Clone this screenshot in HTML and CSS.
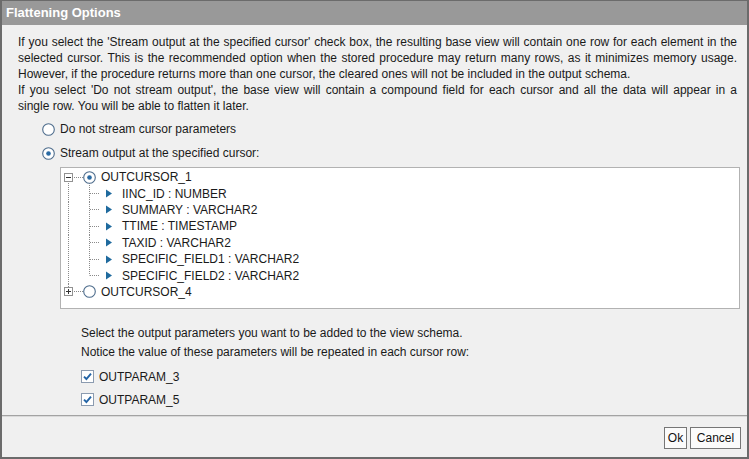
FILE: index.html
```html
<!DOCTYPE html>
<html>
<head>
<meta charset="utf-8">
<link rel="stylesheet" href="styles.css">
</head>
<body>
<div class="dialog">
  <div class="titlebar">Flattening Options</div>
  <div class="content">
    <div class="para">
      <span class="ln jl">If you select the 'Stream output at the specified cursor' check box, the resulting base view will contain one row for each element in the</span>
      <span class="ln jl">selected cursor. This is the recommended option when the stored procedure may return many rows, as it minimizes memory usage.</span>
      <span class="ln">However, if the procedure returns more than one cursor, the cleared ones will not be included in the output schema.</span>
    </div>
    <div class="para">
      <span class="ln jl">If you select 'Do not stream output', the base view will contain a compound field for each cursor and all the data will appear in a</span>
      <span class="ln">single row. You will be able to flatten it later.</span>
    </div>

    <div class="choices">
      <label class="choice">
        <svg class="radio" width="13" height="13" viewBox="0 0 13 13"><circle cx="6.5" cy="6.5" r="5.8" fill="#fff" stroke="#4d6c8c" stroke-width="1.1"/></svg>
        <span>Do not stream cursor parameters</span>
      </label>
      <label class="choice">
        <svg class="radio" width="13" height="13" viewBox="0 0 13 13"><circle cx="6.5" cy="6.5" r="5.8" fill="#fff" stroke="#4d6c8c" stroke-width="1.1"/><circle cx="6.5" cy="6.5" r="2.3" fill="#2a6aa3"/></svg>
        <span>Stream output at the specified cursor:</span>
      </label>
    </div>

    <div class="tree">
      <div class="row">
        <span class="exp exp-open"><span class="box"><svg width="7" height="7" viewBox="0 0 7 7"><path d="M1 3.5H6" stroke="#333" stroke-width="1"/></svg></span></span>
        <span class="hl"></span>
        <span class="rcell rcell-open"><svg width="13" height="13" viewBox="0 0 13 13"><circle cx="6.5" cy="6.5" r="5.8" fill="#fff" stroke="#4d6c8c" stroke-width="1.1"/><circle cx="6.5" cy="6.5" r="2.3" fill="#2a6aa3"/></svg></span>
        <span class="lbl">OUTCURSOR_1</span>
      </div>
      <div class="row child"><span class="g1"></span><span class="g2"></span><svg class="tri" width="6" height="9" viewBox="0 0 6 9"><polygon points="0,0.5 6,4.5 0,8.5" fill="#1f6a9e"/></svg><span class="clbl">IINC_ID : NUMBER</span></div>
      <div class="row child"><span class="g1"></span><span class="g2"></span><svg class="tri" width="6" height="9" viewBox="0 0 6 9"><polygon points="0,0.5 6,4.5 0,8.5" fill="#1f6a9e"/></svg><span class="clbl">SUMMARY : VARCHAR2</span></div>
      <div class="row child"><span class="g1"></span><span class="g2"></span><svg class="tri" width="6" height="9" viewBox="0 0 6 9"><polygon points="0,0.5 6,4.5 0,8.5" fill="#1f6a9e"/></svg><span class="clbl">TTIME : TIMESTAMP</span></div>
      <div class="row child"><span class="g1"></span><span class="g2"></span><svg class="tri" width="6" height="9" viewBox="0 0 6 9"><polygon points="0,0.5 6,4.5 0,8.5" fill="#1f6a9e"/></svg><span class="clbl">TAXID : VARCHAR2</span></div>
      <div class="row child"><span class="g1"></span><span class="g2"></span><svg class="tri" width="6" height="9" viewBox="0 0 6 9"><polygon points="0,0.5 6,4.5 0,8.5" fill="#1f6a9e"/></svg><span class="clbl">SPECIFIC_FIELD1 : VARCHAR2</span></div>
      <div class="row child last"><span class="g1"></span><span class="g2"></span><svg class="tri" width="6" height="9" viewBox="0 0 6 9"><polygon points="0,0.5 6,4.5 0,8.5" fill="#1f6a9e"/></svg><span class="clbl">SPECIFIC_FIELD2 : VARCHAR2</span></div>
      <div class="row">
        <span class="exp exp-last"><span class="box"><svg width="7" height="7" viewBox="0 0 7 7"><path d="M1 3.5H6M3.5 1V6" stroke="#333" stroke-width="1"/></svg></span></span>
        <span class="hl"></span>
        <span class="rcell"><svg width="13" height="13" viewBox="0 0 13 13"><circle cx="6.5" cy="6.5" r="5.8" fill="#fff" stroke="#4d6c8c" stroke-width="1.1"/></svg></span>
        <span class="lbl">OUTCURSOR_4</span>
      </div>
    </div>

    <div class="notes">
      <div class="note">Select the output parameters you want to be added to the view schema.</div>
      <div class="note">Notice the value of these parameters will be repeated in each cursor row:</div>
    </div>

    <div class="params">
      <label class="param">
        <svg class="check" width="13" height="13" viewBox="0 0 13 13"><rect x="0.5" y="0.5" width="12" height="12" fill="#fff" stroke="#8b9bb0"/><path d="M3 6.6L5.4 9L10 3.6" fill="none" stroke="#2364a6" stroke-width="1.9"/></svg>
        <span>OUTPARAM_3</span>
      </label>
      <label class="param">
        <svg class="check" width="13" height="13" viewBox="0 0 13 13"><rect x="0.5" y="0.5" width="12" height="12" fill="#fff" stroke="#8b9bb0"/><path d="M3 6.6L5.4 9L10 3.6" fill="none" stroke="#2364a6" stroke-width="1.9"/></svg>
        <span>OUTPARAM_5</span>
      </label>
    </div>
  </div>
  <div class="footer">
    <button class="btn btn-ok">Ok</button>
    <button class="btn btn-cancel">Cancel</button>
  </div>
</div>
</body>
</html>
```
FILE: styles.css
```css
* { box-sizing: border-box; }
html, body { margin: 0; padding: 0; }
body {
  font-family: "Liberation Sans", Arial, sans-serif;
  font-size: 12px;
  color: #1a1a1a;
  background: #f0f0f0;
}
.dialog {
  width: 749px;
  height: 459px;
  border: 2px solid #6b6b6b;
  border-top-width: 1px;
  background: #f0f0f0;
  display: flex;
  flex-direction: column;
}
.titlebar {
  height: 24px;
  background: #999999;
  color: #ffffff;
  font-weight: bold;
  font-size: 13px;
  line-height: 24px;
  padding-left: 4px;
  flex: none;
}
.content {
  flex: 1;
  padding: 9px 10px 0 16px;
  display: flex;
  flex-direction: column;
}
.para .ln {
  display: block;
  line-height: 16px;
  height: 16px;
  white-space: nowrap;
  text-align: left;
}
.para .ln.jl {
  white-space: normal;
  text-align: justify;
  text-align-last: justify;
}
.choices {
  margin-top: 5px;
  margin-left: 24px;
  display: flex;
  flex-direction: column;
  gap: 4px;
}
.choice {
  display: flex;
  align-items: center;
  height: 20px;
}
.radio { flex: none; display: block; }
.choice span { margin-left: 5px; }

.tree {
  margin-top: 4px;
  margin-left: 42px;
  margin-right: -3px;
  background: #ffffff;
  border: 1px solid #b2b2b2;
  padding: 1px 0 7px 3px;
  height: 142px;
}
.row {
  display: flex;
  align-items: center;
  height: 16.4px;
}
.exp {
  width: 9px;
  height: 100%;
  display: flex;
  align-items: center;
  flex: none;
  background-repeat: no-repeat;
  background-image: repeating-linear-gradient(to bottom, #8a8a8a 0 1px, transparent 1px 2px);
  background-size: 1px 50%;
}
.exp-open { background-position: 4px 100%; }
.exp-last { background-position: 4px 0; }
.box {
  width: 9px;
  height: 9px;
  border: 1px solid #919191;
  background: #fff;
  display: block;
}
.box svg { display: block; }
.hl {
  width: 10px;
  height: 100%;
  flex: none;
  background-repeat: no-repeat;
  background-image: repeating-linear-gradient(to right, #8a8a8a 0 1px, transparent 1px 2px);
  background-size: 100% 1px;
  background-position: 1px 50%;
}
.rcell {
  width: 13px;
  height: 100%;
  flex: none;
  display: flex;
  align-items: center;
}
.rcell-open {
  background-repeat: no-repeat;
  background-image: repeating-linear-gradient(to bottom, #8a8a8a 0 1px, transparent 1px 2px);
  background-size: 1px 50%;
  background-position: 6px 100%;
}
.rcell svg { display: block; }
.lbl { margin-left: 5px; white-space: nowrap; }

.g1 {
  width: 25px;
  height: 100%;
  flex: none;
  background-repeat: no-repeat;
  background-image: repeating-linear-gradient(to bottom, #8a8a8a 0 1px, transparent 1px 2px);
  background-size: 1px 100%;
  background-position: 4px 0;
}
.g2 {
  width: 11px;
  height: 100%;
  flex: none;
  background-repeat: no-repeat, no-repeat;
  background-image:
    repeating-linear-gradient(to bottom, #8a8a8a 0 1px, transparent 1px 2px),
    repeating-linear-gradient(to right, #8a8a8a 0 1px, transparent 1px 2px);
  background-size: 1px 100%, 10px 1px;
  background-position: 0 0, 1px 50%;
}
.last .g2 { background-size: 1px 50%, 10px 1px; }
.tri { flex: none; margin-left: 6px; display: block; }
.clbl { margin-left: 10px; white-space: nowrap; }

.notes {
  margin-top: 15px;
  margin-left: 63px;
}
.note { line-height: 19px; height: 19px; }

.params {
  margin-top: 3px;
  margin-left: 63px;
  display: flex;
  flex-direction: column;
}
.param {
  display: flex;
  align-items: center;
  height: 23px;
}
.check { display: block; flex: none; }
.param span { margin-left: 5px; }

.footer {
  flex: none;
  height: 42px;
  border-top: 1px solid #a3a3a3;
  box-shadow: inset 0 1px 0 #dadada;
  display: flex;
  justify-content: flex-end;
  align-items: flex-start;
  gap: 3px;
  padding: 11px 6px 0 0;
}
.btn {
  font-family: "Liberation Sans", Arial, sans-serif;
  font-size: 12px;
  color: #111;
  height: 22px;
  background: #fbfbfb;
  border: 1px solid #767676;
  border-radius: 0;
  padding: 0;
  margin: 0;
  text-align: center;
}
.btn-ok { width: 23px; }
.btn-cancel { width: 51px; }
```
